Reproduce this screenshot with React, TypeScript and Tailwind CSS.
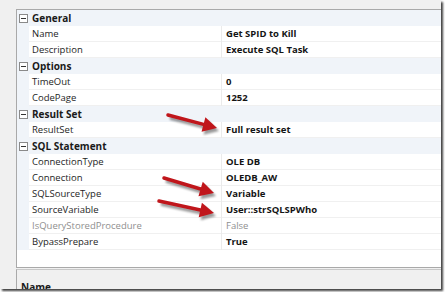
import React from "react";

type Row =
  | { kind: "cat"; label: string }
  | { kind: "prop"; name: string; value: string; disabled?: boolean };

const rows: Row[] = [
  { kind: "cat", label: "General" },
  { kind: "prop", name: "Name", value: "Get SPID to Kill" },
  { kind: "prop", name: "Description", value: "Execute SQL Task" },
  { kind: "cat", label: "Options" },
  { kind: "prop", name: "TimeOut", value: "0" },
  { kind: "prop", name: "CodePage", value: "1252" },
  { kind: "cat", label: "Result Set" },
  { kind: "prop", name: "ResultSet", value: "Full result set" },
  { kind: "cat", label: "SQL Statement" },
  { kind: "prop", name: "ConnectionType", value: "OLE DB" },
  { kind: "prop", name: "Connection", value: "OLEDB_AW" },
  { kind: "prop", name: "SQLSourceType", value: "Variable" },
  { kind: "prop", name: "SourceVariable", value: "User::strSQLSPWho" },
  { kind: "prop", name: "IsQueryStoredProcedure", value: "False", disabled: true },
  { kind: "prop", name: "BypassPrepare", value: "True" },
];

function MinusBox() {
  return (
    <div className="w-[9px] h-[9px] border border-[#8a8a8a] bg-white flex items-center justify-center">
      <div className="w-[5px] h-px bg-[#333]" />
    </div>
  );
}

function Arrow({ x1, y1, x2, y2 }: { x1: number; y1: number; x2: number; y2: number }) {
  const a = Math.atan2(y2 - y1, x2 - x1);
  const len = 14;
  const w = 7.5;
  const bx = x2 - Math.cos(a) * len;
  const by = y2 - Math.sin(a) * len;
  const px = -Math.sin(a) * w;
  const py = Math.cos(a) * w;
  const head = `${x2},${y2} ${bx + px},${by + py} ${bx - px},${by - py}`;
  return (
    <g>
      <g transform="translate(2,3)" opacity="0.4" filter="url(#blur)">
        <line x1={x1} y1={y1} x2={bx} y2={by} stroke="#000" strokeWidth="3.5" />
        <polygon points={head} fill="#000" />
      </g>
      <line x1={x1} y1={y1} x2={bx} y2={by} stroke="#c0161b" strokeWidth="3.5" strokeLinecap="round" />
      <polygon points={head} fill="#c0161b" />
    </g>
  );
}

export default function App() {
  return (
    <div className="w-[445px] h-[292px] bg-white relative overflow-hidden" style={{ fontFamily: '"Open Sans", sans-serif' }}>
      <div className="w-[441px] h-[289px] bg-[#f0f0f0] shadow-[2px_2px_2px_rgba(0,0,0,0.75)] pt-[9px] pl-[16px] flex flex-col overflow-hidden">
        <div className="h-[267px] border border-r-0 border-[#a9a9a9] bg-white flex flex-col">
          {rows.map((r, i) =>
            r.kind === "cat" ? (
              <div key={i} className="h-4 flex items-center bg-[#f0f4f9] shrink-0">
                <div className="w-[12px] pl-[2px] flex items-center">
                  <MinusBox />
                </div>
                <span className="pl-[3px] text-[10px] font-bold text-[#1a1a1a] leading-none">{r.label}</span>
              </div>
            ) : (
              <div key={i} className="h-4 flex shrink-0">
                <div className="w-[12px] bg-[#f0f4f9]" />
                <div className="w-[192px] border-b border-[#f0f0f0] flex items-center pl-[3px]">
                  <span className={`text-[9.5px] leading-none ${r.disabled ? "text-[#8f8f8f]" : "text-[#1e1e1e]"}`}>{r.name}</span>
                </div>
                <div className="w-px bg-[#ebebeb]" />
                <div className="flex-1 border-b border-[#f0f0f0] flex items-center pl-[4px]">
                  <span className={`text-[9.5px] leading-none ${r.disabled ? "text-[#8f8f8f]" : "font-bold text-[#141414]"}`}>{r.value}</span>
                </div>
              </div>
            )
          )}
        </div>
        <div className="mt-[1px] border-t border-[#c8c8c8] border-l border-l-[#a9a9a9] h-[20px] bg-[#f0f0f0] pl-[4px] pt-[3px]">
          <span className="text-[10px] font-bold text-[#1a1a1a] leading-none">Name</span>
        </div>
      </div>
      <svg className="absolute left-0 top-0" width="445" height="292">
        <defs>
          <filter id="blur">
            <feGaussianBlur stdDeviation="1.2" />
          </filter>
        </defs>
        <Arrow x1={168} y1={115} x2={217} y2={128} />
        <Arrow x1={164} y1={178} x2={214} y2={193} />
        <Arrow x1={159} y1={201} x2={214} y2={213} />
      </svg>
    </div>
  );
}
